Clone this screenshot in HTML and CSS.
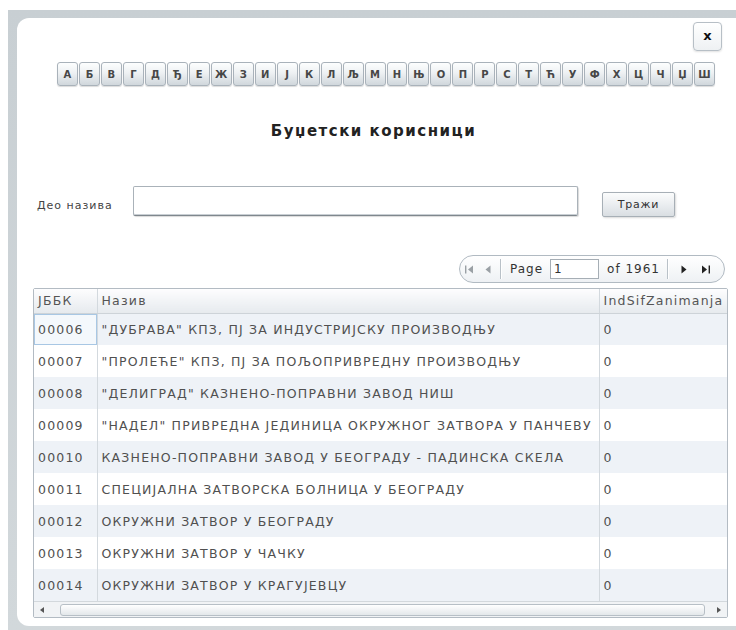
FILE: index.html
```html
<!DOCTYPE html>
<html lang="sr">
<head>
<meta charset="utf-8">
<title>Буџетски корисници</title>
<link rel="stylesheet" href="styles.css">
</head>
<body>
<div class="frame">
  <div class="dialog">
    <div class="dialog-top">
      <button class="close-btn" type="button">x</button>
    </div>

    <div class="alphabet">
      <button class="letter" type="button">А</button>
      <button class="letter" type="button">Б</button>
      <button class="letter" type="button">В</button>
      <button class="letter" type="button">Г</button>
      <button class="letter" type="button">Д</button>
      <button class="letter" type="button">Ђ</button>
      <button class="letter" type="button">Е</button>
      <button class="letter" type="button">Ж</button>
      <button class="letter" type="button">З</button>
      <button class="letter" type="button">И</button>
      <button class="letter" type="button">Ј</button>
      <button class="letter" type="button">К</button>
      <button class="letter" type="button">Л</button>
      <button class="letter" type="button">Љ</button>
      <button class="letter" type="button">М</button>
      <button class="letter" type="button">Н</button>
      <button class="letter" type="button">Њ</button>
      <button class="letter" type="button">О</button>
      <button class="letter" type="button">П</button>
      <button class="letter" type="button">Р</button>
      <button class="letter" type="button">С</button>
      <button class="letter" type="button">Т</button>
      <button class="letter" type="button">Ћ</button>
      <button class="letter" type="button">У</button>
      <button class="letter" type="button">Ф</button>
      <button class="letter" type="button">Х</button>
      <button class="letter" type="button">Ц</button>
      <button class="letter" type="button">Ч</button>
      <button class="letter" type="button">Џ</button>
      <button class="letter" type="button">Ш</button>
    </div>

    <h1 class="title">Буџетски корисници</h1>

    <div class="search-row">
      <label class="search-label" for="q">Део назива</label>
      <input class="search-input" id="q" type="text">
      <button class="search-btn" type="button">Тражи</button>
    </div>

    <div class="pager-row">
      <div class="pager">
        <span class="pg-btn pg-first is-disabled">
          <svg width="9" height="9" viewBox="0 0 9 9"><rect x="0" y="0.5" width="1.4" height="8" fill="currentColor"/><path d="M8 0.5 L3 4.5 L8 8.5 Z" fill="currentColor"/></svg>
        </span>
        <span class="pg-btn pg-prev is-disabled">
          <svg width="6" height="9" viewBox="0 0 6 9"><path d="M5.5 0.5 L0.5 4.5 L5.5 8.5 Z" fill="currentColor"/></svg>
        </span>
        <span class="pg-sep"></span>
        <span class="pg-text pg-label">Page</span>
        <input class="pg-input" type="text" value="1">
        <span class="pg-text pg-total">of 1961</span>
        <span class="pg-sep pg-sep-right"></span>
        <span class="pg-btn pg-next">
          <svg width="6" height="9" viewBox="0 0 6 9"><path d="M0.5 0.5 L5.5 4.5 L0.5 8.5 Z" fill="currentColor"/></svg>
        </span>
        <span class="pg-btn pg-last">
          <svg width="9" height="9" viewBox="0 0 9 9"><path d="M1 0.5 L6 4.5 L1 8.5 Z" fill="currentColor"/><rect x="7.6" y="0.5" width="1.4" height="8" fill="currentColor"/></svg>
        </span>
      </div>
    </div>

    <div class="grid">
      <table class="grid-table">
        <colgroup>
          <col class="col-code">
          <col class="col-name">
          <col class="col-ind">
        </colgroup>
        <thead>
          <tr><th>ЈББК</th><th>Назив</th><th>IndSifZanimanja</th></tr>
        </thead>
        <tbody>
          <tr><td class="is-current">00006</td><td>"ДУБРАВА" КПЗ, ПЈ ЗА ИНДУСТРИЈСКУ ПРОИЗВОДЊУ</td><td>0</td></tr>
          <tr><td>00007</td><td>"ПРОЛЕЋЕ" КПЗ, ПЈ ЗА ПОЉОПРИВРЕДНУ ПРОИЗВОДЊУ</td><td>0</td></tr>
          <tr><td>00008</td><td>"ДЕЛИГРАД" КАЗНЕНО-ПОПРАВНИ ЗАВОД НИШ</td><td>0</td></tr>
          <tr><td>00009</td><td>"НАДЕЛ" ПРИВРЕДНА ЈЕДИНИЦА ОКРУЖНОГ ЗАТВОРА У ПАНЧЕВУ</td><td>0</td></tr>
          <tr><td>00010</td><td>КАЗНЕНО-ПОПРАВНИ ЗАВОД У БЕОГРАДУ - ПАДИНСКА СКЕЛА</td><td>0</td></tr>
          <tr><td>00011</td><td>СПЕЦИЈАЛНА ЗАТВОРСКА БОЛНИЦА У БЕОГРАДУ</td><td>0</td></tr>
          <tr><td>00012</td><td>ОКРУЖНИ ЗАТВОР У БЕОГРАДУ</td><td>0</td></tr>
          <tr><td>00013</td><td>ОКРУЖНИ ЗАТВОР У ЧАЧКУ</td><td>0</td></tr>
          <tr><td>00014</td><td>ОКРУЖНИ ЗАТВОР У КРАГУЈЕВЦУ</td><td>0</td></tr>
        </tbody>
      </table>
      <div class="hscroll">
        <span class="hs-arrow">
          <svg width="4" height="6" viewBox="0 0 4 6"><path d="M4 0 L0 3 L4 6 Z" fill="currentColor"/></svg>
        </span>
        <span class="hs-thumb"></span>
        <span class="hs-arrow">
          <svg width="4" height="6" viewBox="0 0 4 6"><path d="M0 0 L4 3 L0 6 Z" fill="currentColor"/></svg>
        </span>
      </div>
    </div>
  </div>
</div>
</body>
</html>
```

FILE: styles.css
```css
* { box-sizing: border-box; }

html, body {
  margin: 0;
  padding: 0;
  background: #fff;
}

body {
  width: 736px;
  height: 630px;
  overflow: hidden;
  font-family: "DejaVu Sans", Verdana, sans-serif;
  color: #3f3f3f;
}

/* grey window chrome around the dialog */
.frame {
  margin: 10px 0 0 8px;
  height: 620px;
  padding: 8px 0 4px 9px;
  background: linear-gradient(#c8cfd3, #d2d8db);
}

.dialog {
  height: 100%;
  background: #fff;
  border-radius: 12px 0 0 12px;
  padding-top: 4px;
  display: flex;
  flex-direction: column;
}

.dialog-top {
  display: flex;
  justify-content: flex-end;
  padding-right: 14px;
}

.close-btn {
  width: 29px;
  height: 29px;
  padding: 0 0 3px;
  border: 1px solid #b7bfc6;
  border-radius: 4px;
  background: linear-gradient(#ffffff, #eef1f3);
  box-shadow: 0 1px 2px rgba(0, 0, 0, 0.12);
  font: bold 13px "DejaVu Sans", sans-serif;
  color: #111;
}

/* alphabet filter */
.alphabet {
  display: grid;
  grid-template-columns: repeat(30, 1fr);
  gap: 1px;
  width: 658px;
  height: 24px;
  margin: 11px 0 0 40px;
}

.letter {
  padding: 0;
  border: 1px solid #a9b2ba;
  border-radius: 3px;
  background: linear-gradient(#fdfefe, #eef1f3 45%, #d0d7dc);
  box-shadow: 0 1px 1px rgba(0, 0, 0, 0.14);
  font: bold 10px "DejaVu Sans", sans-serif;
  color: #474747;
}

.title {
  margin: 36px 0 0;
  padding-right: 6px;
  font-size: 15px;
  line-height: 18px;
  font-weight: bold;
  letter-spacing: 1.5px;
  text-align: center;
  color: #222;
}

/* search line */
.search-row {
  display: flex;
  align-items: center;
  margin-top: 44px;
  padding-left: 20px;
}

.search-label {
  width: 96px;
  padding-top: 9px;
  font-size: 11px;
  letter-spacing: 1px;
  color: #444;
}

.search-input {
  width: 445px;
  height: 30px;
  border: 1px solid #aab2b9;
  border-bottom-color: #7f878d;
  border-radius: 2px;
  box-shadow: inset 0 -1px 0 #c9cfd4, 1px 1px 1px rgba(0, 0, 0, 0.15);
  background: #fff;
}

.search-btn {
  width: 73px;
  height: 25px;
  margin: 8px 0 0 24px;
  padding: 0;
  border: 1px solid #a7afb6;
  border-radius: 2px;
  background: linear-gradient(#fbfcfc, #e9ecef 55%, #d9dee2);
  box-shadow: 1px 1px 2px rgba(0, 0, 0, 0.15);
  font: 11px "DejaVu Sans", sans-serif;
  letter-spacing: 0.8px;
  color: #333;
}

/* paging control */
.pager-row {
  display: flex;
  justify-content: flex-end;
  margin-top: 38px;
  padding-right: 11px;
}

.pager {
  display: flex;
  align-items: center;
  width: 266px;
  height: 28px;
  padding-left: 5px;
  border: 1px solid #b1bac2;
  border-radius: 14px;
  background: linear-gradient(#ffffff, #eef1f4);
  font-size: 12px;
  letter-spacing: 1px;
  color: #333;
}

.pg-btn {
  display: flex;
  align-items: center;
  color: #222;
}

.pg-btn.is-disabled { color: #9aa0a5; }

.pg-prev { margin-left: 11px; }

.pg-sep {
  width: 1px;
  height: 20px;
  margin-left: 9px;
  background: #b9c1c8;
  box-shadow: 1px 0 0 #fff;
}

.pg-label { margin-left: 9px; }

.pg-input {
  width: 49px;
  height: 20px;
  margin-left: 7px;
  padding: 0 0 0 3px;
  border: 1px solid #a6aeb5;
  background: #fff;
  font: 12px "DejaVu Sans", sans-serif;
  color: #333;
}

.pg-total { margin-left: 8px; }

.pg-sep-right { margin-left: 7px; }

.pg-next { margin-left: 13px; }

.pg-last { margin-left: 14px; }

/* data grid */
.grid {
  margin: 5px 8px 0 16px;
  border: 1px solid #b3bbc3;
  border-radius: 2px;
  background: #fff;
}

.grid-table {
  width: 100%;
  border-collapse: collapse;
  table-layout: fixed;
  font-size: 12.5px;
  letter-spacing: 1.2px;
  color: #505050;
}

.col-code { width: 63px; }
.col-name { width: 502px; }

.grid-table th {
  height: 24px;
  padding: 0 4px;
  font-weight: normal;
  text-align: left;
  color: #555;
  background: linear-gradient(#fdfdfe, #e6eaee);
  border-bottom: 1px solid #cdd3d8;
}

.grid-table td {
  height: 32px;
  padding: 0 4px;
  white-space: nowrap;
  overflow: hidden;
}

.grid-table th + th,
.grid-table td + td {
  border-left: 1px solid #d3d9de;
}

.grid-table tbody tr:nth-child(odd) { background: #eef2f7; }

.grid-table td.is-current {
  box-shadow: inset 0 0 0 1px #a8c7e4;
  background: #f4f8fc;
}

.hscroll {
  display: flex;
  align-items: center;
  height: 16px;
  padding: 0 6px;
  background: #f1f3f5;
  border-top: 1px solid #d3d8dc;
  color: #555;
}

.hs-arrow { display: flex; align-items: center; }

.hs-thumb {
  flex: 1;
  height: 12px;
  margin: 0 12px 0 16px;
  border: 1px solid #b7bfc6;
  border-radius: 3px;
  background: linear-gradient(#ffffff, #e3e7ea);
}
```
